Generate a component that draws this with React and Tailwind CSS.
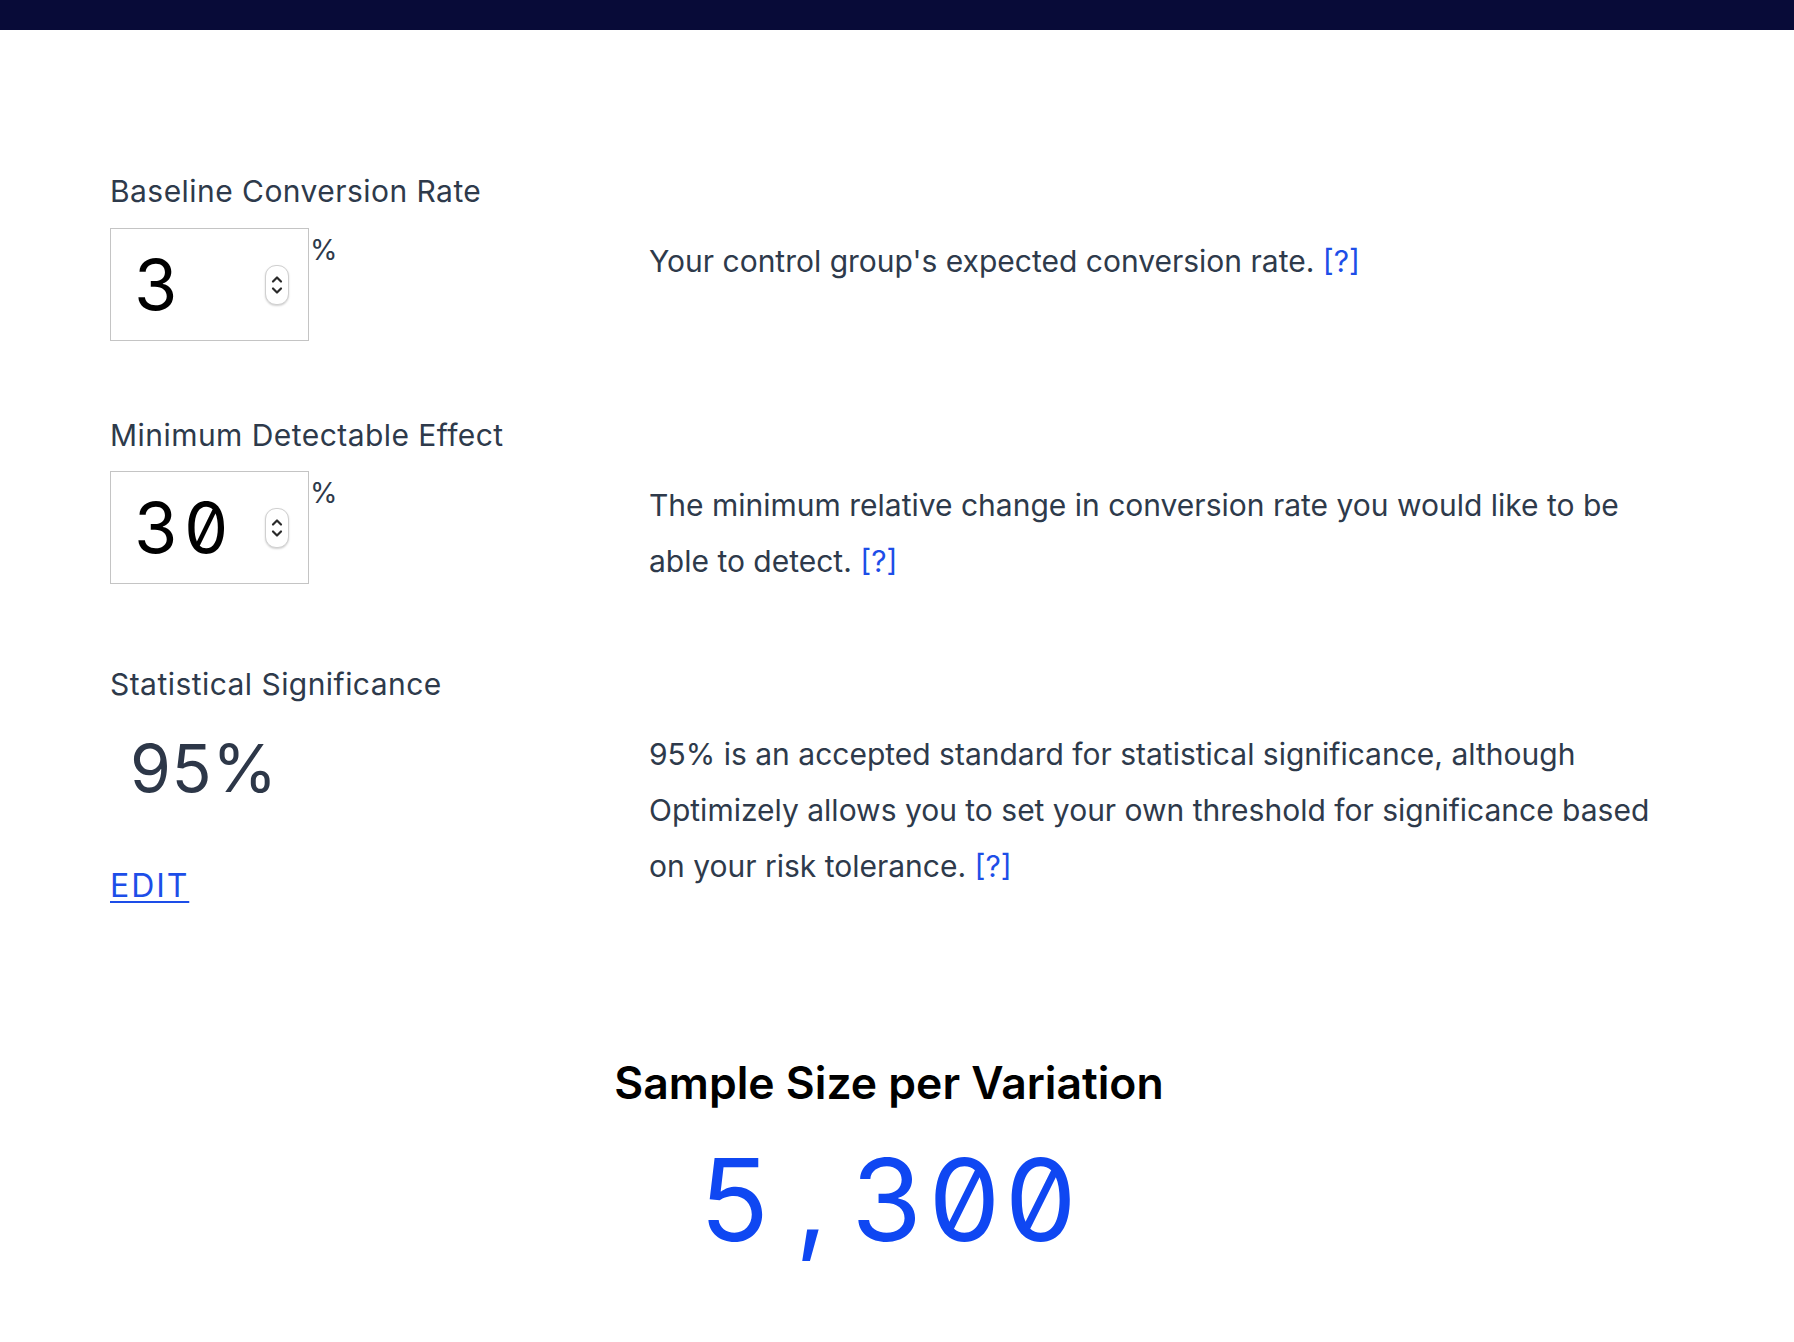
import React from "react";

const sans = { fontFamily: "Inter, 'Noto Sans', sans-serif" };
const num = { fontFamily: "Inter, 'DejaVu Sans Mono', monospace", fontFeatureSettings: "'zero' 1, 'tnum' 1" };

function Spinner() {
  return (
    <div className="flex h-[40px] w-[24px] flex-col items-center justify-center rounded-[11px] border border-[#d0d0d0] bg-white shadow-[0_1px_2px_rgba(0,0,0,0.18)]">
      <svg width="14" height="30" viewBox="0 0 14 30" fill="none">
        <path d="M3 11.5 L7 7.5 L11 11.5" stroke="#2a2a2a" strokeWidth="2.2" strokeLinecap="round" strokeLinejoin="round" />
        <path d="M3 18.5 L7 22.5 L11 18.5" stroke="#2a2a2a" strokeWidth="2.2" strokeLinecap="round" strokeLinejoin="round" />
      </svg>
    </div>
  );
}

function NumberBox({ value }) {
  return (
    <div className="flex items-start">
      <div className="flex h-[113px] w-[199px] items-center justify-between border border-[#c4c4c4] bg-white pl-[23px] pr-[19px]">
        <span className="text-[70px] leading-none tracking-[0.06em] text-black" style={num}>{value}</span>
        <Spinner />
      </div>
      <span className="ml-[1px] mt-[4px] text-[28px] leading-[36px] text-[#2e3a4b]">%</span>
    </div>
  );
}

function Help() {
  return <a href="#" className="text-[#1d4ee8]">[?]</a>;
}

const label = "text-[30px] leading-[36px] tracking-[0.015em] text-[#2e3a4b]";
const desc = "w-[1025px] text-[30px] leading-[56px] tracking-[0em] text-[#2e3a4b]";

export default function App() {
  return (
    <div className="min-h-[1342px] w-full bg-white" style={sans}>
      <div className="h-[30px] w-full bg-[#080b38]" />
      <div className="pl-[110px] pt-[143px]">
        {/* Row 1 */}
        <div className={label}>Baseline Conversion Rate</div>
        <div className="mt-[19px] flex items-start">
          <div className="w-[539px]">
            <NumberBox value="3" />
          </div>
          <p className={`mt-[5px] ${desc}`}>
            Your control group's expected conversion rate. <Help />
          </p>
        </div>

        {/* Row 2 */}
        <div className={`mt-[76px] ${label}`}>Minimum Detectable Effect</div>
        <div className="mt-[18px] flex items-start">
          <div className="w-[539px]">
            <NumberBox value="30" />
          </div>
          <p className={`mt-[6px] ${desc}`}>
            The minimum relative change in conversion rate you would like to be able to detect. <Help />
          </p>
        </div>

        {/* Row 3 */}
        <div className={`mt-[77px] ${label}`}>Statistical Significance</div>
        <div className="mt-[19px] flex items-start">
          <div className="w-[539px]">
            <div className="pl-[20px] text-[66px] leading-[94px] tracking-[0.01em] text-[#2d3748]">95%</div>
            <a href="#" className="mt-[51px] block text-[32px] leading-[40px] tracking-[0.06em] text-[#1d4ee8] underline decoration-2 underline-offset-[4px]">EDIT</a>
          </div>
          <p className={`mt-[5px] ${desc}`}>
            95% is an accepted standard for statistical significance, although Optimizely allows you to set your own threshold for significance based on your risk tolerance. <Help />
          </p>
        </div>
      </div>

      {/* Result */}
      <div className="mt-[151px] flex flex-col items-center pr-[16px]">
        <h2 className="text-[44.5px] font-semibold leading-[52px] text-black">Sample Size per Variation</h2>
        <div className="mt-[26px] text-[114px] leading-[130px] tracking-[0.02em] text-[#0f47f2]" style={num}>
          5<span className="mx-[22px]">,</span>300
        </div>
      </div>
    </div>
  );
}
